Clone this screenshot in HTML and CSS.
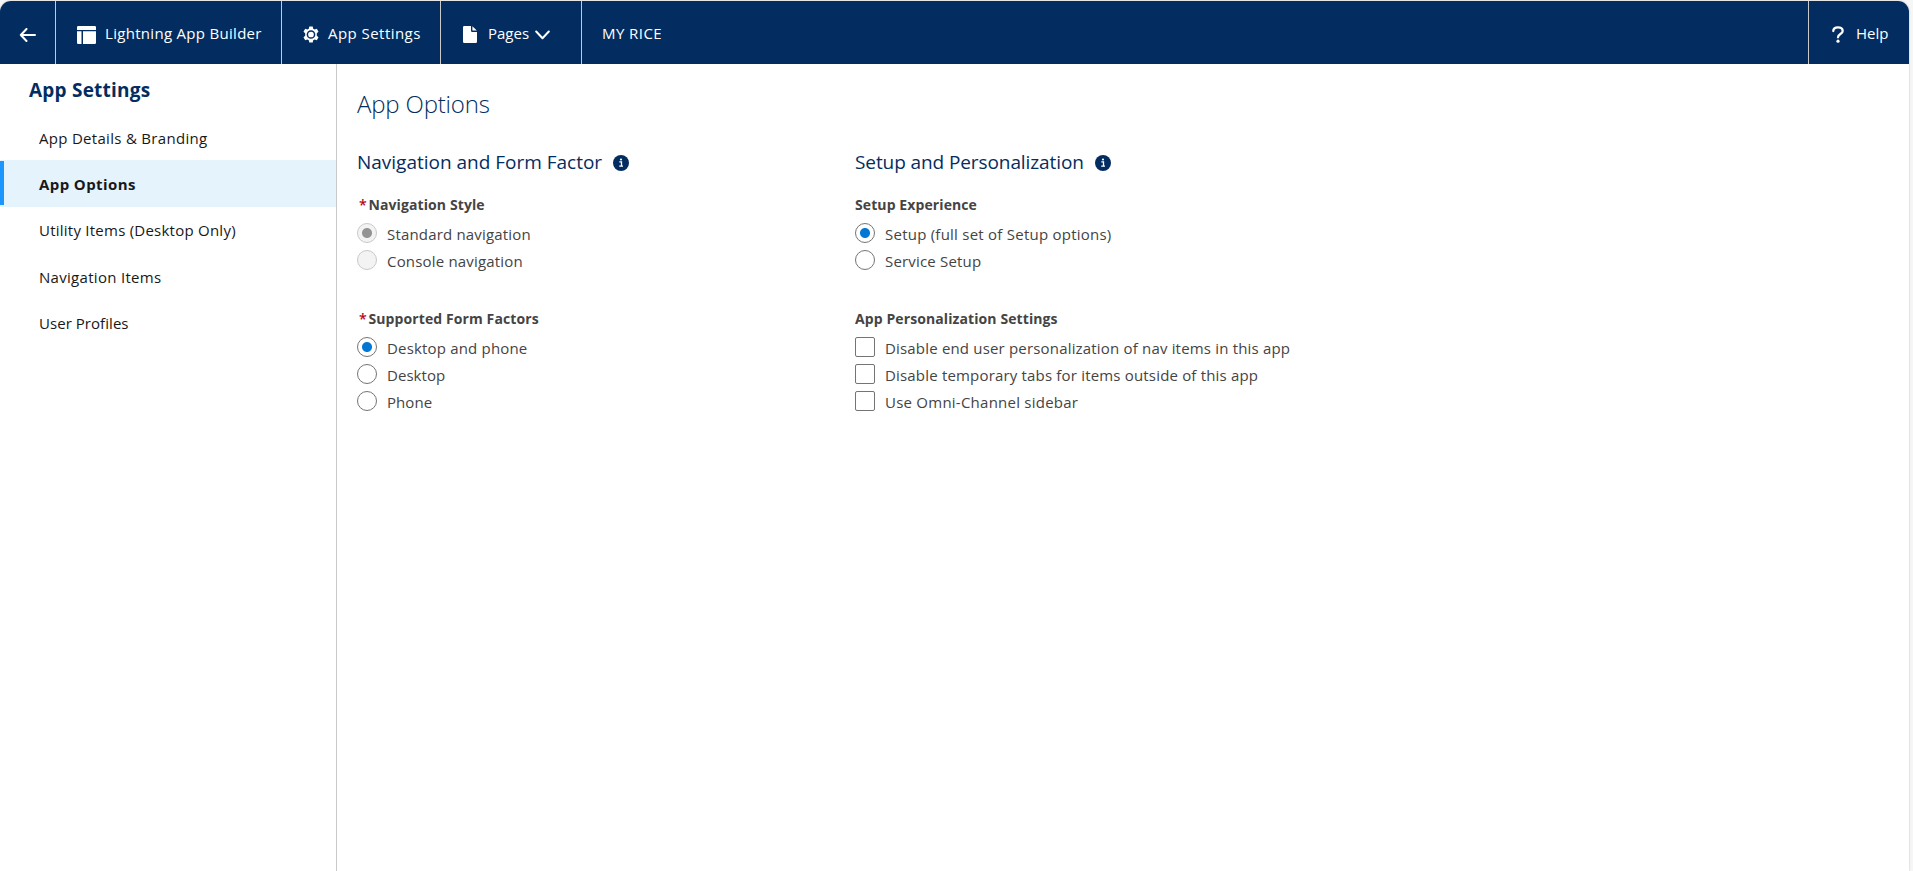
FILE: index.html
```html
<!DOCTYPE html>
<html lang="en">
<head>
<meta charset="utf-8">
<title>App Options</title>
<link rel="stylesheet" href="styles.css">
</head>
<body>
<div class="window">
  <header class="topbar">
    <a class="bar-item back"><svg width="18" height="14" viewBox="0 0 18 14"><path d="M7.5 1 1.8 7l5.7 6M1.8 7H16" fill="none" stroke="#fff" stroke-width="2" stroke-linecap="round" stroke-linejoin="round"/></svg></a>
    <a class="bar-item builder"><svg width="19" height="18" viewBox="0 0 19 18" fill="#fff"><path d="M1.2 0h16.6Q19 0 19 1.2V4H0V1.2Q0 0 1.2 0ZM0 5.3h4.5V18H1.2Q0 18 0 16.8ZM6 5.3h13v11.5q0 1.2-1.2 1.2H6Z"/></svg><span>Lightning App Builder</span></a>
    <a class="bar-item settings"><svg width="16" height="17" viewBox="0 0 16 17"><path d="M6.3.5h3.4l.5 2.2 1.4.8 2.2-.7 1.7 2.9-1.7 1.6v2.4l1.7 1.6-1.7 2.9-2.2-.7-1.4.8-.5 2.2H6.3l-.5-2.2-1.4-.8-2.2.7-1.7-2.9 1.7-1.6V7.3L.5 5.7l1.7-2.9 2.2.7 1.4-.8Z" fill="#fff"/><circle cx="8" cy="8.5" r="3.6" fill="none" stroke="#032d60" stroke-width="1.5"/></svg><span>App Settings</span></a>
    <a class="bar-item pages"><svg width="14" height="17" viewBox="0 0 14 17" fill="#fff"><path d="M1.3 0H8v4.7Q8 6 9.3 6H14v9.7q0 1.3-1.3 1.3H1.3Q0 17 0 15.7V1.3Q0 0 1.3 0ZM9.4.2 13.8 4.6H9.9q-.5 0-.5-.5Z"/></svg><span>Pages</span><svg class="chevron" width="15" height="10" viewBox="0 0 15 10"><path d="m1.2 1.5 6.3 6.7 6.3-6.7" fill="none" stroke="#fff" stroke-width="2" stroke-linecap="round" stroke-linejoin="round"/></svg></a>
    <span class="bar-item name"><span>MY RICE</span></span>
    <a class="bar-item help"><svg width="12" height="17" viewBox="0 0 12 17"><path d="M1.3 5C1.3 2.6 3.4 1.3 6 1.3s4.7 1.4 4.7 3.6C10.7 8 6 8 6 11.3" fill="none" stroke="#fff" stroke-width="2.3" stroke-linecap="round"/><circle cx="6" cy="15.2" r="1.6" fill="#fff"/></svg><span>Help</span></a>
  </header>
  <div class="body">
    <nav class="sidebar">
      <h2 class="side-title">App Settings</h2>
      <ul class="side-list">
        <li class="side-item">App Details &amp; Branding</li>
        <li class="side-item active">App Options</li>
        <li class="side-item utility">Utility Items (Desktop Only)</li>
        <li class="side-item">Navigation Items</li>
        <li class="side-item compact">User Profiles</li>
      </ul>
    </nav>
    <main class="main">
      <h1 class="page-title">App Options</h1>
      <div class="columns">
        <section class="column">
          <h2 class="section-title"><span>Navigation and Form Factor</span><svg class="info" width="16" height="16" viewBox="0 0 16 16"><circle cx="8" cy="8" r="8" fill="#032d60"/><path d="M6.3 6.9h2.2v4M6.2 11.2h3.8" fill="none" stroke="#fff" stroke-width="1.3"/><circle cx="8" cy="4.5" r="1.1" fill="#fff"/></svg></h2>
          <div class="group">
            <h3 class="legend"><b class="required">*</b><span>Navigation Style</span></h3>
            <label class="option"><i class="radio disabled on"></i><span>Standard navigation</span></label>
            <label class="option"><i class="radio disabled"></i><span>Console navigation</span></label>
          </div>
          <div class="group">
            <h3 class="legend"><b class="required">*</b><span>Supported Form Factors</span></h3>
            <label class="option"><i class="radio on"></i><span>Desktop and phone</span></label>
            <label class="option compact"><i class="radio"></i><span>Desktop</span></label>
            <label class="option compact"><i class="radio"></i><span>Phone</span></label>
          </div>
        </section>
        <section class="column">
          <h2 class="section-title personalization"><span>Setup and Personalization</span><svg class="info" width="16" height="16" viewBox="0 0 16 16"><circle cx="8" cy="8" r="8" fill="#032d60"/><path d="M6.3 6.9h2.2v4M6.2 11.2h3.8" fill="none" stroke="#fff" stroke-width="1.3"/><circle cx="8" cy="4.5" r="1.1" fill="#fff"/></svg></h2>
          <div class="group">
            <h3 class="legend"><span>Setup Experience</span></h3>
            <label class="option wide"><i class="radio on"></i><span>Setup (full set of Setup options)</span></label>
            <label class="option"><i class="radio"></i><span>Service Setup</span></label>
          </div>
          <div class="group">
            <h3 class="legend"><span>App Personalization Settings</span></h3>
            <label class="option"><i class="checkbox"></i><span>Disable end user personalization of nav items in this app</span></label>
            <label class="option"><i class="checkbox"></i><span>Disable temporary tabs for items outside of this app</span></label>
            <label class="option wide"><i class="checkbox"></i><span>Use Omni-Channel sidebar</span></label>
          </div>
        </section>
      </div>
    </main>
  </div>
</div>
</body>
</html>
```
FILE: styles.css
```css
* { box-sizing: border-box; }
body { margin: 0; height: 871px; overflow: hidden; background: #f6f6f6; font-family: "Open Sans", "Noto Sans", sans-serif; font-size: 15px; color: #181818; }
h1, h2, h3, ul { margin: 0; padding: 0; }
svg { display: block; flex: none; }

.window { display: flex; flex-direction: column; width: 1909px; height: 870px; margin-top: 1px; background: #fff; border-radius: 11px 11px 0 0; box-shadow: 0 0 2px rgba(0, 0, 0, 0.25); }

/* Top bar */
.topbar { display: flex; height: 63px; background: #032d60; color: #fff; border-radius: 11px 11px 0 0; }
.bar-item { display: flex; align-items: center; height: 63px; padding: 4px 0 0 20px; border-right: 1px solid #c9c9c9; line-height: 20px; white-space: nowrap; }
.bar-item span { padding-bottom: 3px; }
.back { width: 56px; padding-left: 19px; }
.builder { width: 226px; gap: 9px; padding-left: 21px; letter-spacing: 0.3px; }
.settings { width: 159px; gap: 9px; padding-left: 21px; letter-spacing: 0.45px; }
.pages { width: 141px; gap: 11px; padding-left: 22px; }
.chevron { margin-left: -5px; }
.name { border-right: 0; letter-spacing: 0.45px; }
.help { width: 101px; margin-left: auto; gap: 12px; padding-left: 23px; border-left: 1px solid #c9c9c9; border-right: 0; }

/* Sidebar */
.body { display: flex; flex: 1; }
.sidebar { width: 337px; border-right: 1px solid #c9c9c9; }
.side-title { padding: 13px 0 0 29px; font-size: 19px; line-height: 27px; letter-spacing: 0.22px; color: #032d60; }
.side-list { list-style: none; padding-top: 10px; }
.side-item { height: 46.25px; padding: 1px 0 0 39px; line-height: 46px; letter-spacing: 0.3px; }
.side-item.active { font-weight: 700; letter-spacing: 0.4px; background: linear-gradient(#1b96ff, #1b96ff) 0 50% / 4px 44px no-repeat #e5f3fd; }
.side-item.utility { line-height: 45px; letter-spacing: 0.24px; }
.side-item.compact { letter-spacing: 0.05px; }

/* Content */
.main { flex: 1; padding: 23px 0 0 20px; }
.page-title { font-size: 24px; font-weight: 300; line-height: 34px; letter-spacing: -0.18px; color: #032d60; }
.columns { display: flex; padding-top: 27px; }
.column { width: 498px; }
.section-title { display: flex; align-items: center; gap: 11px; font-size: 19px; font-weight: 400; line-height: 28px; color: #032d60; letter-spacing: -0.01px; }
.section-title.personalization { letter-spacing: -0.09px; }
.info { margin-top: 2px; }
.group { padding-top: 17px; height: 114px; }
.legend { display: flex; font-size: 14px; line-height: 24px; padding-bottom: 6px; letter-spacing: 0.1px; color: #444; }
.required { color: #ba0517; width: 11.5px; padding-left: 2px; font-weight: 600; }
.option { display: flex; height: 27px; gap: 10px; line-height: 22px; letter-spacing: 0.18px; color: #444; }
.option.wide { letter-spacing: 0.24px; }
.option.compact { letter-spacing: 0.05px; }
.radio, .checkbox { width: 20px; height: 20px; border: 1px solid #747474; background: #fff; }
.radio { border-radius: 50%; }
.checkbox { border-radius: 2px; }
.radio.on { background: radial-gradient(circle, #0176d3 4.5px, transparent 5.5px); }
.radio.disabled { border-color: #c9c9c9; background-color: #f3f3f3; }
.radio.disabled.on { background-image: radial-gradient(circle, #939393 4.5px, transparent 5.5px); }
```
